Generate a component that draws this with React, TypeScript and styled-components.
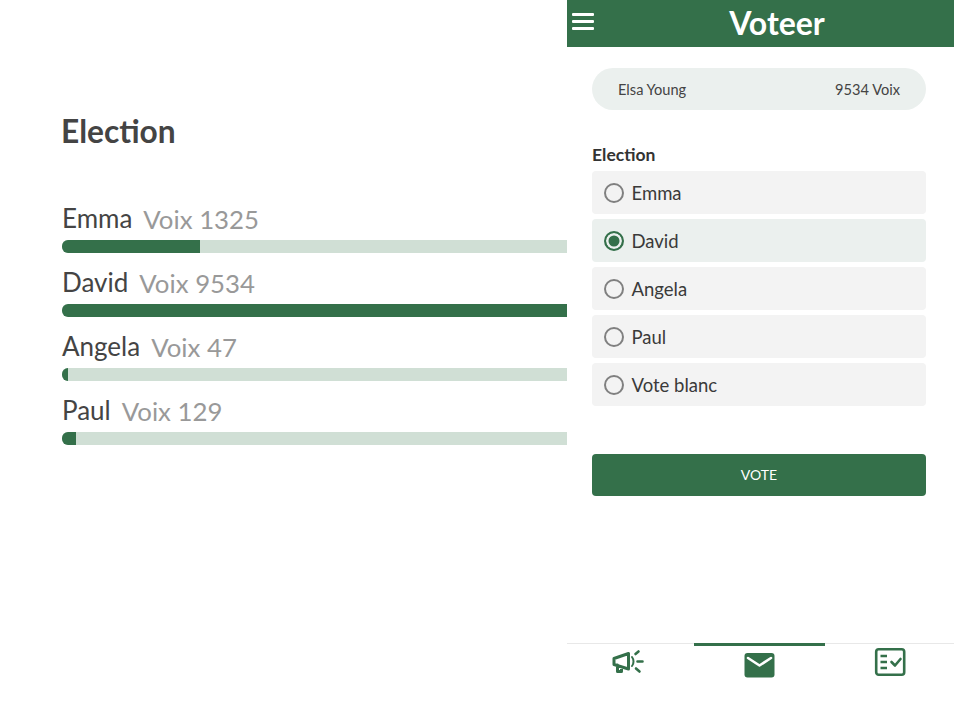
import React from 'react';
import styled, {createGlobalStyle} from 'styled-components';

const GREEN = '#34704a';

const results = [
  {name: 'Emma', votes: 1325, fill: 138},
  {name: 'David', votes: 9534, fill: 505},
  {name: 'Angela', votes: 47, fill: 6},
  {name: 'Paul', votes: 129, fill: 14},
];

const options = ['Emma', 'David', 'Angela', 'Paul', 'Vote blanc'];

const Megaphone = () => (
  <svg width="32" height="32" viewBox="2 0 32 32" overflow="visible" fill="none" stroke={GREEN} strokeLinecap="round" strokeLinejoin="round">
    <path d="M1 12.5 L15.5 7.5 V23 L1 18.5 Z M4.5 19 V25.5 H8.5 V21" strokeWidth="3" />
    <path d="M19 11 C21 13.5 21 17.5 19 20" strokeWidth="2" />
    <path d="M22.5 8 L25.5 5.5 M24.5 15.5 H29.5 M23 22.5 L26.5 25.5" strokeWidth="2.6" />
  </svg>
);

const Envelope = () => (
  <svg width="32" height="32" viewBox="0 0 32 32">
    <rect x="0.5" y="7" width="30" height="24.5" rx="3" fill={GREEN} />
    <path d="M4 12 L15.5 19.5 L27 12" fill="none" stroke="#fff" strokeWidth="2.6" strokeLinecap="round" strokeLinejoin="round" />
  </svg>
);

const Checklist = () => (
  <svg width="32" height="32" viewBox="0 0 32 32" fill="none" stroke={GREEN}>
    <rect x="2.2" y="3.2" width="28" height="25.5" rx="2.5" strokeWidth="2.6" />
    <path d="M6.5 10 H13 M6.5 16 H13 M6.5 22 H13" strokeWidth="2.4" />
    <path d="M17.5 16 L21 19.5 L26.5 13" strokeWidth="2.6" strokeLinecap="round" strokeLinejoin="round" />
  </svg>
);

const App = () => {
  return (
    <>
      <GlobalStyle />
      <Page>
        <ResultsPanel>
          <ResultsTitle>Election</ResultsTitle>
          {results.map(r => (
            <ResultRow key={r.name}>
              <ResultLabel>
                <CandidateName>{r.name}</CandidateName>
                <VoteCount>Voix {r.votes}</VoteCount>
              </ResultLabel>
              <BarTrack>
                <BarFill $width={r.fill} />
              </BarTrack>
            </ResultRow>
          ))}
        </ResultsPanel>

        <Phone>
          <Header>
            <MenuButton>
              <span />
              <span />
              <span />
            </MenuButton>
            <AppTitle>Voteer</AppTitle>
          </Header>

          <Content>
            <UserPill>
              <span>Elsa Young</span>
              <span>9534 Voix</span>
            </UserPill>

            <SectionLabel>Election</SectionLabel>
            <OptionList>
              {options.map(o => (
                <OptionRow key={o} $selected={o === 'David'}>
                  <RadioCircle $selected={o === 'David'} />
                  {o}
                </OptionRow>
              ))}
            </OptionList>

            <VoteButton>VOTE</VoteButton>
          </Content>

          <TabBar>
            <Tab><Megaphone /></Tab>
            <Tab $active><Envelope /></Tab>
            <Tab><Checklist /></Tab>
          </TabBar>
        </Phone>
      </Page>
    </>
  );
};

export default App;

const GlobalStyle = createGlobalStyle`
  html, body {
    margin: 0;
    padding: 0;
    background: #fff;
    font-family: 'Lato', 'Open Sans', sans-serif;
  }
`;

const Page = styled.div`
  display: flex;
  width: 954px;
  height: 716px;
  overflow: hidden;
`;

const ResultsPanel = styled.div`
  width: 567px;
  padding: 112px 0 0 62px;
  box-sizing: border-box;
`;

const ResultsTitle = styled.h1`
  margin: 0 0 53px -1px;
  font-size: 31.7px;
  line-height: 38px;
  font-weight: 700;
  color: #444;
`;

const ResultRow = styled.div`
  height: 64px;
`;

const ResultLabel = styled.div`
  display: flex;
  align-items: flex-start;
  gap: 11px;
  height: 37px;
`;

const CandidateName = styled.span`
  font-size: 26px;
  line-height: 30px;
  color: #444;
`;

const VoteCount = styled.span`
  font-size: 25.8px;
  line-height: 32px;
  color: #999;
`;

const BarTrack = styled.div`
  height: 13px;
  background: #d0dfd5;
  border-radius: 6px 0 0 6px;
  overflow: hidden;
`;

const BarFill = styled.div<{$width: number}>`
  width: ${p => p.$width}px;
  height: 100%;
  background: ${GREEN};
`;

const Phone = styled.div`
  width: 387px;
  height: 716px;
  display: flex;
  flex-direction: column;
`;

const Header = styled.header`
  display: flex;
  align-items: center;
  height: 47px;
  padding: 0 6px 0 5px;
  background: ${GREEN};
`;

const MenuButton = styled.div`
  display: flex;
  flex-direction: column;
  gap: 4px;
  width: 22px;
  margin-bottom: 5px;

  span {
    height: 3px;
    background: #fff;
    border-radius: 1px;
  }
`;

const AppTitle = styled.div`
  flex: 1;
  padding: 0 0 3px 12px;
  text-align: center;
  font-size: 32px;
  font-weight: 700;
  color: #fff;
`;

const Content = styled.main`
  flex: 1;
  padding: 21px 28px 0 25px;
`;

const UserPill = styled.div`
  display: flex;
  align-items: center;
  justify-content: space-between;
  height: 42px;
  padding: 0 26px;
  box-sizing: border-box;
  border-radius: 21px;
  background: #ebf0ee;
  font-size: 14.6px;
  color: #444;
`;

const SectionLabel = styled.div`
  margin: 33.5px 0 6.5px;
  font-size: 17.5px;
  line-height: 21px;
  font-weight: 700;
  color: #333;
`;

const OptionList = styled.div`
  display: flex;
  flex-direction: column;
  gap: 5px;
`;

const OptionRow = styled.div<{$selected?: boolean}>`
  display: flex;
  align-items: center;
  gap: 7.5px;
  height: 43px;
  padding-left: 12px;
  box-sizing: border-box;
  border-radius: 4px;
  background: ${p => (p.$selected ? '#ebf0ee' : '#f3f3f3')};
  font-size: 18.5px;
  color: #3a3a3a;
`;

const RadioCircle = styled.span<{$selected?: boolean}>`
  width: 20px;
  height: 20px;
  box-sizing: border-box;
  border-radius: 50%;
  border: 2px solid ${p => (p.$selected ? GREEN : '#808080')};
  background: ${p => (p.$selected ? GREEN : 'transparent')};
  box-shadow: ${p => (p.$selected ? 'inset 0 0 0 2.5px #ebf0ee' : 'none')};
`;

const VoteButton = styled.button`
  display: block;
  width: 100%;
  height: 42px;
  margin-top: 48px;
  padding: 0 0 2px;
  border: 0;
  border-radius: 4px;
  background: ${GREEN};
  color: #fff;
  font-family: inherit;
  font-size: 14px;
`;

const TabBar = styled.nav`
  display: grid;
  grid-template-columns: 127px 131px 129px;
  height: 73px;
  border-top: 1px solid #e8e8e8;
  box-sizing: border-box;
`;

const Tab = styled.div<{$active?: boolean}>`
  display: flex;
  justify-content: center;
  align-items: flex-start;
  height: 36px;
  border-top: 3px solid ${p => (p.$active ? GREEN : 'transparent')};
  margin-top: -1px;
`;
